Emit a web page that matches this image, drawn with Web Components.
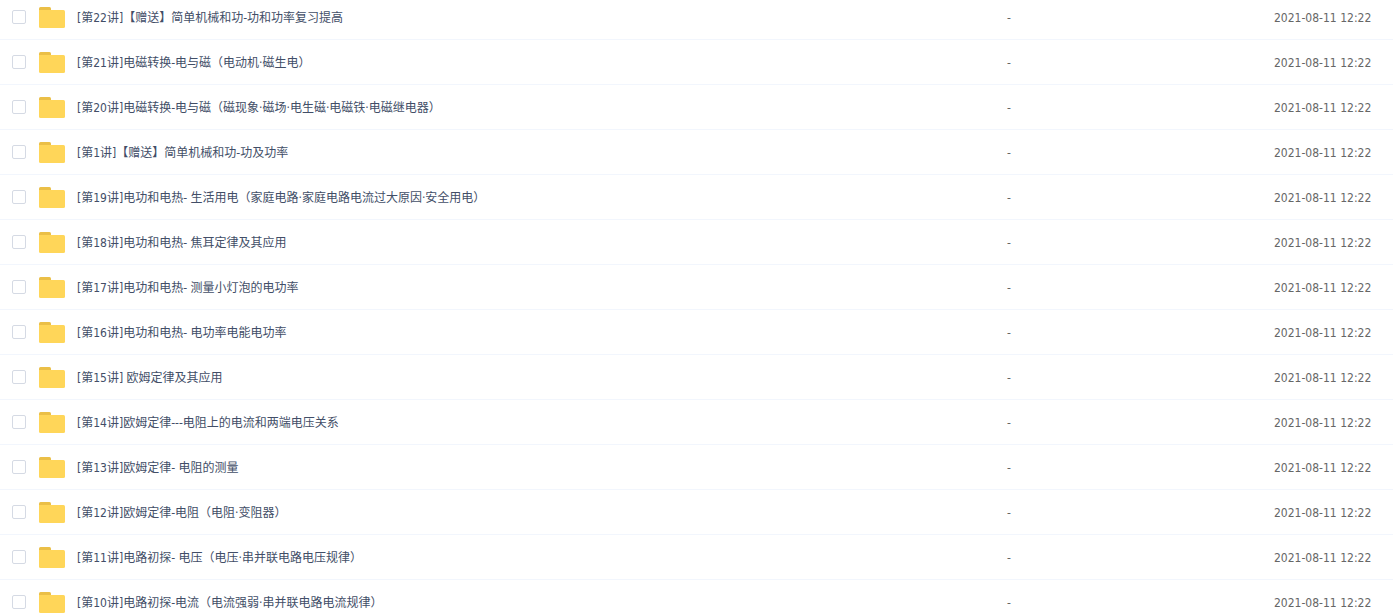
<!DOCTYPE html>
<html lang="zh-CN">
<head>
<meta charset="utf-8">
<title>文件列表</title>
<style>
  body { margin: 0; background: #fff; font: 12px/18px "DejaVu Sans Condensed", "Noto Sans CJK SC", sans-serif; color: #424e67; }
</style>
</head>
<body>
<file-list></file-list>

<template id="check-template">
  <style>
    :host { display: block; width: 14px; height: 14px; }
    input { appearance: none; display: block; box-sizing: border-box; width: 14px; height: 14px; margin: 0; border: 1px solid #d5dae4; border-radius: 2px; background: #fff; }
    input:checked { background: #09aaff; border-color: #09aaff; }
  </style>
  <input type="checkbox">
</template>

<template id="folder-template">
  <style>
    :host { display: block; width: 26px; height: 21px; }
    svg { display: block; }
  </style>
  <svg width="26" height="21" viewBox="0 0 26 21" aria-hidden="true">
    <path d="M0 6V1.500Q0 0 1.500 0H10.500Q12 0 12 1.500V6Z" fill="#ebbf47"/>
    <path d="M0 3H24.500Q26 3 26 4.500V19.500Q26 21 24.500 21H1.500Q0 21 0 19.500Z" fill="#ffd659"/>
  </svg>
</template>

<template id="entry-template">
  <style>
    :host { display: flex; align-items: center; gap: 12px; white-space: nowrap; }
    a { padding-top: 2px; color: inherit; text-decoration: none; }
    a:hover { color: #09aaff; }
    file-check { margin-right: 1px; }
  </style>
  <file-check></file-check>
  <folder-icon></folder-icon>
  <a href="#"><slot></slot></a>
</template>

<template id="list-template">
  <style>
    :host { display: block; height: 100vh; overflow: hidden; }
    /* The list is scrolled slightly past the top of its first row. */
    table { width: 100%; margin-top: -5px; table-layout: fixed; border-collapse: separate; border-spacing: 0; }
    td { box-sizing: border-box; height: 45px; padding: 0; border-bottom: 1px solid #f2f6fd; vertical-align: middle; }
    .name { padding-left: 12px; }
    .size { width: 267px; }
    .date { width: 119px; }
    .size, .date { padding-top: 2px; color: #666; white-space: nowrap; }
  </style>
  <table><tbody></tbody></table>
</template>

<script>
  const cloneTemplate = id => document.getElementById(id).content.cloneNode(true);

  customElements.define('file-check', class extends HTMLElement {
    constructor() {
      super();
      this.attachShadow({ mode: 'open' }).append(cloneTemplate('check-template'));
    }
    set label(text) {
      this.shadowRoot.querySelector('input').setAttribute('aria-label', text);
    }
  });

  customElements.define('folder-icon', class extends HTMLElement {
    constructor() {
      super();
      this.attachShadow({ mode: 'open' }).append(cloneTemplate('folder-template'));
    }
  });

  customElements.define('file-entry', class extends HTMLElement {
    constructor() {
      super();
      this.attachShadow({ mode: 'open' }).append(cloneTemplate('entry-template'));
    }
    connectedCallback() {
      customElements.upgrade(this.shadowRoot);
      this.shadowRoot.querySelector('file-check').label = this.textContent;
    }
  });

  const folders = [
    '[第22讲]【赠送】简单机械和功-功和功率复习提高',
    '[第21讲]电磁转换-电与磁（电动机·磁生电）',
    '[第20讲]电磁转换-电与磁（磁现象·磁场·电生磁·电磁铁·电磁继电器）',
    '[第1讲]【赠送】简单机械和功-功及功率',
    '[第19讲]电功和电热- 生活用电（家庭电路·家庭电路电流过大原因·安全用电）',
    '[第18讲]电功和电热- 焦耳定律及其应用',
    '[第17讲]电功和电热- 测量小灯泡的电功率',
    '[第16讲]电功和电热- 电功率电能电功率',
    '[第15讲] 欧姆定律及其应用',
    '[第14讲]欧姆定律---电阻上的电流和两端电压关系',
    '[第13讲]欧姆定律- 电阻的测量',
    '[第12讲]欧姆定律-电阻（电阻·变阻器）',
    '[第11讲]电路初探- 电压（电压·串并联电路电压规律）',
    '[第10讲]电路初探-电流（电流强弱·串并联电路电流规律）'
  ];

  customElements.define('file-list', class extends HTMLElement {
    constructor() {
      super();
      this.attachShadow({ mode: 'open' }).append(cloneTemplate('list-template'));
    }
    connectedCallback() {
      const body = this.shadowRoot.querySelector('tbody');
      for (const name of folders) {
        const row = body.insertRow();
        const entry = document.createElement('file-entry');
        entry.textContent = name;
        const nameCell = row.insertCell();
        nameCell.className = 'name';
        nameCell.append(entry);
        const size = row.insertCell();
        size.className = 'size';
        size.textContent = '-';
        const date = row.insertCell();
        date.className = 'date';
        date.textContent = '2021-08-11 12:22';
      }
    }
  });
</script>
</body>
</html>
